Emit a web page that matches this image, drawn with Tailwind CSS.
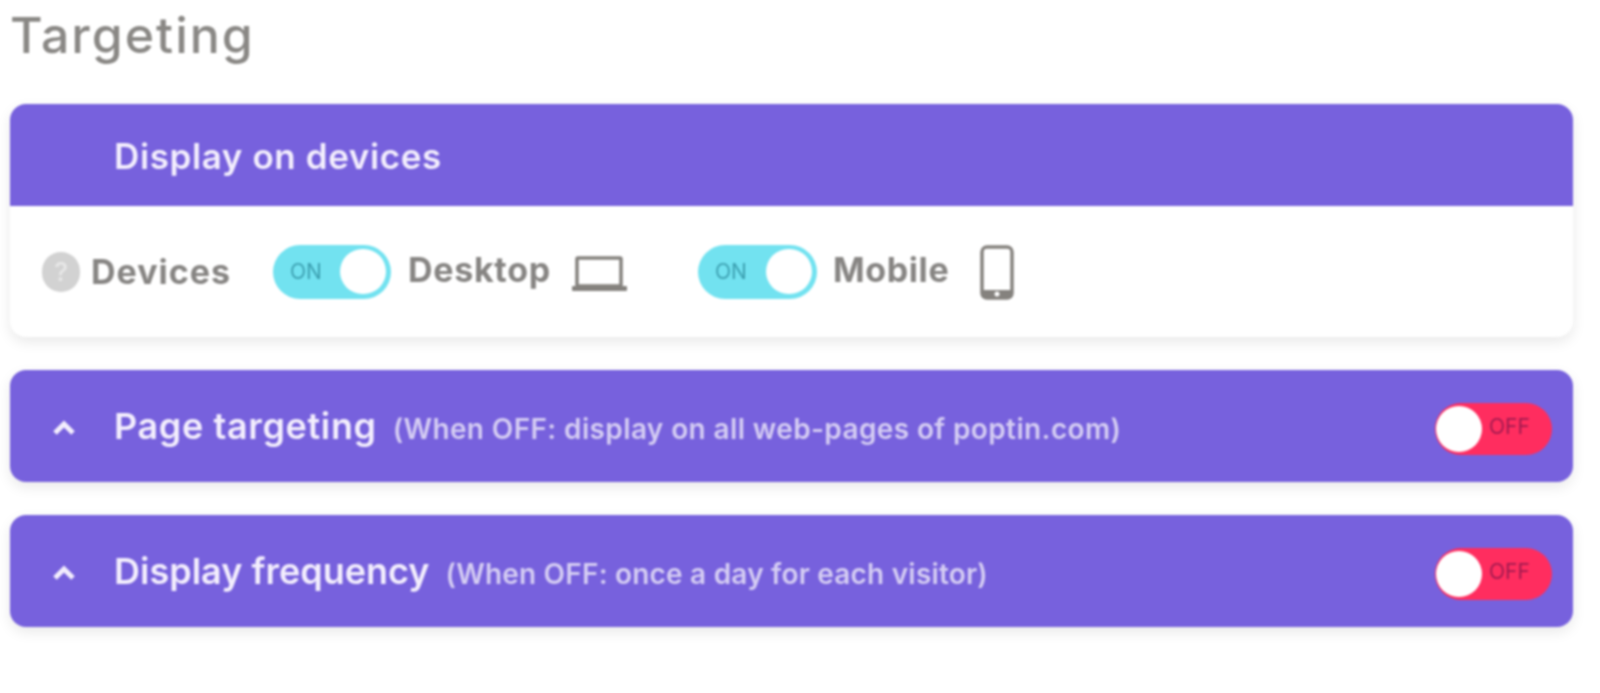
<!DOCTYPE html>
<html lang="en">
  <head>
    <meta charset="UTF-8" />
    <meta name="viewport" content="width=device-width, initial-scale=1.0" />
    <title>Targeting</title>
    <script src="https://cdn.jsdelivr.net/npm/@tailwindcss/browser@4"></script>
  </head>
  <body class="bg-white font-['Inter',sans-serif] overflow-hidden">
    <div class="pl-[10px] pr-[27px] h-[693px] blur-[0.8px]">
      <h1 class="h-[104px] pt-[5px] text-[50px] leading-[60px] font-medium tracking-[2px] text-[#8a8885]">Targeting</h1>

      <section class="rounded-2xl bg-white shadow-[0_5px_14px_rgba(0,0,0,0.09)] overflow-hidden">
        <div class="h-[102px] bg-[#7761dd] pl-[104px] flex items-center">
          <h2 class="mt-[3px] text-[35px] font-semibold tracking-[0.6px] text-[#f3eefd]">Display on devices</h2>
        </div>
        <div class="h-[131px] pl-[32px] flex items-center">
          <span class="w-[38px] h-[40px] rounded-full bg-[#d2d2d2] text-[#e8e8e8] text-[26px] font-medium flex items-center justify-center">?</span>
          <span class="ml-[11px] w-[182px] text-[34px] font-bold tracking-[1px] text-[#878583]">Devices</span>

          <div class="w-[118px] h-[54px] rounded-full bg-[#72e2f0] flex items-center justify-between pl-[17px] pr-[5px]">
            <span class="text-[21px] text-[#3c9fb0]">ON</span>
            <span class="w-[46px] h-[45px] rounded-full bg-white"></span>
          </div>
          <span class="ml-[17px] mb-[4px] w-[164px] text-[34px] font-bold tracking-[0.7px] text-[#878583]">Desktop</span>
          <svg class="w-[55px] h-[35px] mt-[3px]" viewBox="0 0 55 35" fill="none" stroke="#85827e">
            <rect x="5" y="2" width="44" height="28" stroke-width="3.5" rx="1" />
            <rect x="0" y="30" width="55" height="5" fill="#85827e" stroke="none" rx="1" />
          </svg>

          <div class="ml-[71px] w-[119px] h-[54px] rounded-full bg-[#72e2f0] flex items-center justify-between pl-[17px] pr-[5px]">
            <span class="text-[21px] text-[#3c9fb0]">ON</span>
            <span class="w-[46px] h-[45px] rounded-full bg-white"></span>
          </div>
          <span class="ml-[16px] mb-[4px] w-[147px] text-[34px] font-bold tracking-[0.6px] text-[#878583]">Mobile</span>
          <svg class="w-[34px] h-[55px] mt-[2px]" viewBox="0 0 34 55" fill="none">
            <rect x="2" y="2" width="30" height="51" rx="5" stroke="#85827e" stroke-width="3.5" />
            <rect x="2" y="45" width="30" height="8" fill="#85827e" />
            <circle cx="17" cy="49" r="2.5" fill="#fff" />
          </svg>
        </div>
      </section>

      <section class="mt-[33px] h-[112px] rounded-2xl bg-[#7761dd] shadow-[0_5px_14px_rgba(0,0,0,0.09)] flex items-center pl-[43px] pr-[21px]">
        <svg class="w-[22px] h-[15px] mt-[3px]" viewBox="0 0 22 15" fill="none" stroke="#f3eefd" stroke-width="5">
          <path d="M2 13 L11 4 L20 13" />
        </svg>
        <h2 class="ml-[39px] text-[36px] font-semibold tracking-[0.62px] text-[#f3eefd]">Page targeting</h2>
        <span class="ml-[16px] mt-[5px] text-[28px] font-semibold tracking-[0.37px] text-[#d5cdf3]">(When OFF: display on all web-pages of poptin.com)</span>
        <div class="ml-auto mt-[5px] w-[117px] h-[52px] rounded-full bg-[#ff2d5f] flex items-center pl-[1px]">
          <span class="w-[46px] h-[46px] rounded-full bg-white"></span>
          <span class="ml-[7px] mb-[3px] text-[21px] text-[#a01a50]">OFF</span>
        </div>
      </section>

      <section class="mt-[33px] h-[112px] rounded-2xl bg-[#7761dd] shadow-[0_5px_14px_rgba(0,0,0,0.09)] flex items-center pl-[43px] pr-[21px]">
        <svg class="w-[22px] h-[15px] mt-[3px]" viewBox="0 0 22 15" fill="none" stroke="#f3eefd" stroke-width="5">
          <path d="M2 13 L11 4 L20 13" />
        </svg>
        <h2 class="ml-[39px] text-[36px] font-semibold text-[#f3eefd]">Display frequency</h2>
        <span class="ml-[16px] mt-[5px] text-[28px] font-semibold tracking-[0.2px] text-[#d5cdf3]">(When OFF: once a day for each visitor)</span>
        <div class="ml-auto mt-[5px] w-[117px] h-[52px] rounded-full bg-[#ff2d5f] flex items-center pl-[1px]">
          <span class="w-[46px] h-[46px] rounded-full bg-white"></span>
          <span class="ml-[7px] mb-[3px] text-[21px] text-[#a01a50]">OFF</span>
        </div>
      </section>
    </div>
  </body>
</html>
